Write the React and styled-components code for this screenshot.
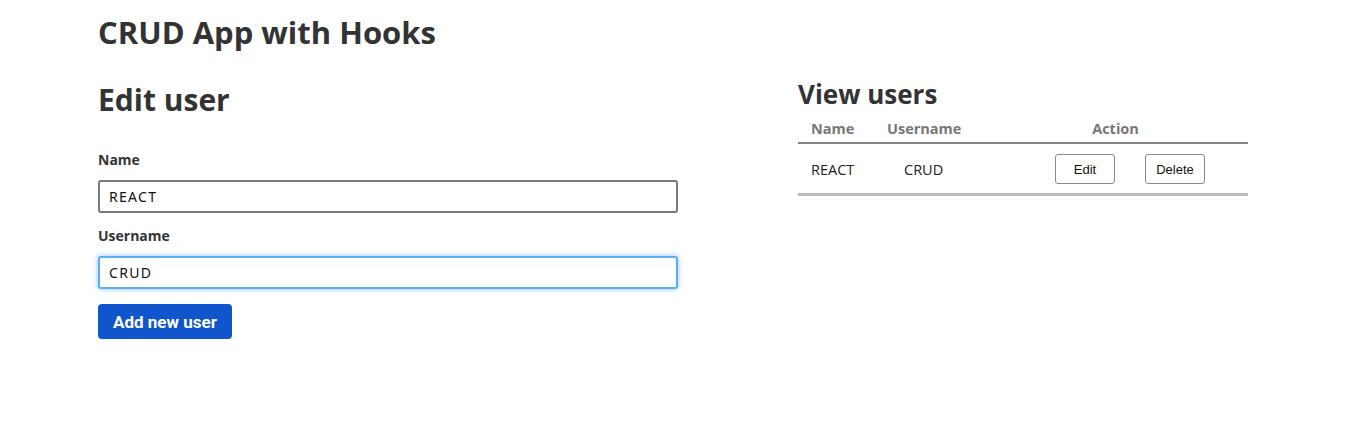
import React, { useState } from 'react';
import styled, { createGlobalStyle } from 'styled-components';

const GlobalStyle = createGlobalStyle`
  body {
    margin: 0;
    background: #fff;
    color: #333;
    font-family: "Open Sans", "Noto Sans", sans-serif;
  }
`;

const Container = styled.div`
  padding: 0 98px;
`;

const Title = styled.h1`
  margin: 0;
  padding-top: 12px;
  font-size: 31px;
  font-weight: 700;
  line-height: 40px;
  color: #333;
`;

const Row = styled.div`
  display: flex;
  gap: 120px;
  align-items: flex-start;
`;

const Column = styled.div`
  width: ${(p) => p.width}px;
`;

const Heading = styled.h2`
  margin: ${(p) => (p.large ? '28px 0 30px' : '26px 0 4px')};
  font-size: ${(p) => (p.large ? '30px' : '26px')};
  line-height: ${(p) => (p.large ? '40px' : '32px')};
  font-weight: 700;
  color: #333;
`;

const Label = styled.label`
  display: block;
  font-size: 14px;
  font-weight: 700;
  line-height: 20px;
  margin-bottom: 10px;
  color: #333;
`;

const Input = styled.input`
  display: block;
  box-sizing: border-box;
  width: 100%;
  height: 33px;
  margin: 0 0 13px;
  padding: 0 9px;
  border: 2px solid ${(p) => (p.focused ? '#5aaef2' : '#7b7b7b')};
  border-radius: 3px;
  box-shadow: ${(p) => (p.focused ? '0 0 5px rgba(80, 160, 240, 0.7)' : 'none')};
  font-family: "Noto Sans", sans-serif;
  font-size: 14px;
  letter-spacing: 1.3px;
  color: #111;
  outline: none;
`;

const PrimaryButton = styled.button`
  margin-top: 2px;
  height: 35px;
  padding: 0 15px;
  border: none;
  border-radius: 4px;
  background: #1155cc;
  color: #fff;
  font-family: Roboto, "Liberation Sans", sans-serif;
  font-size: 17px;
  font-weight: 700;
  cursor: pointer;
`;

const Table = styled.table`
  width: 100%;
  border-collapse: collapse;
`;

const Th = styled.th`
  padding: 0 13px;
  height: 28px;
  text-align: ${(p) => p.align || 'left'};
  font-size: 14.5px;
  font-weight: 700;
  color: #777;
  border-bottom: 2px solid #858585;
`;

const Td = styled.td`
  padding: 1px 13px 0;
  height: 48px;
  font-family: "Open Sans", sans-serif;
  font-size: 14.5px;
  color: #222;
  border-bottom: 3px solid #bdbdbd;
`;

const Actions = styled.div`
  display: flex;
  gap: 30px;
  padding-left: 22px;
`;

const SmallButton = styled.button`
  width: 60px;
  height: 30px;
  padding: 0;
  border: 1px solid #8a8a8a;
  border-radius: 3px;
  background: #fff;
  color: #111;
  font-family: "Liberation Sans", Arial, sans-serif;
  font-size: 13px;
  cursor: pointer;
`;

export default function App() {
  const [user, setUser] = useState({ name: 'REACT', username: 'CRUD' });

  const handleChange = (e) => {
    const { name, value } = e.target;
    setUser({ ...user, [name]: value });
  };

  return (
    <>
      <GlobalStyle />
      <Container>
        <Title>CRUD App with Hooks</Title>
        <Row>
          <Column width={580}>
            <Heading large>Edit user</Heading>
            <form onSubmit={(e) => e.preventDefault()}>
              <Label>Name</Label>
              <Input name="name" value={user.name} onChange={handleChange} />
              <Label>Username</Label>
              <Input name="username" focused value={user.username} onChange={handleChange} />
              <PrimaryButton>Add new user</PrimaryButton>
            </form>
          </Column>
          <Column width={450}>
            <Heading>View users</Heading>
            <Table>
              <thead>
                <tr>
                  <Th style={{ width: 50 }}>Name</Th>
                  <Th style={{ width: 120 }}>Username</Th>
                  <Th align="center" style={{ paddingRight: 50 }}>Action</Th>
                </tr>
              </thead>
              <tbody>
                <tr>
                  <Td>{user.name}</Td>
                  <Td style={{ paddingLeft: 30 }}>{user.username}</Td>
                  <Td>
                    <Actions>
                      <SmallButton>Edit</SmallButton>
                      <SmallButton>Delete</SmallButton>
                    </Actions>
                  </Td>
                </tr>
              </tbody>
            </Table>
          </Column>
        </Row>
      </Container>
    </>
  );
}
